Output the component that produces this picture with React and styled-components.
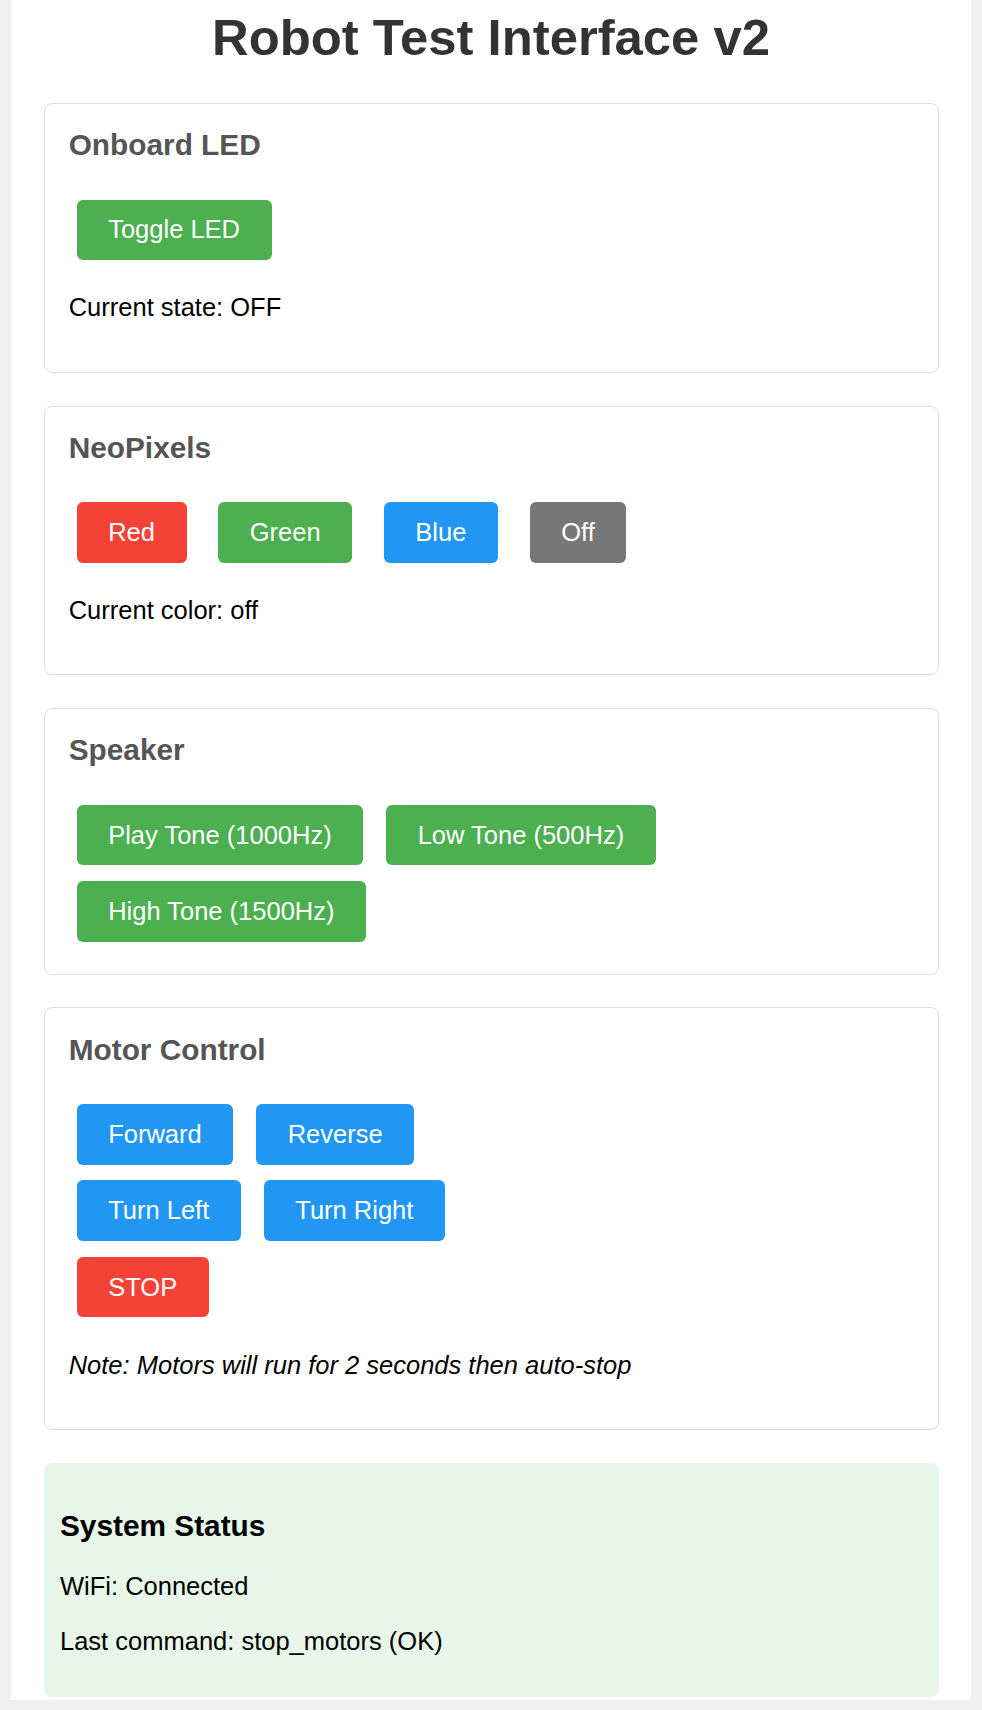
import React from "react";
import styled, { createGlobalStyle } from "styled-components";

const GlobalStyle = createGlobalStyle`
  body {
    margin: 0;
    background: #efefef;
    font-family: "Liberation Sans", Arial, Helvetica, sans-serif;
    font-size: 25.5px;
    color: #000;
  }
`;

const Container = styled.div`
  box-sizing: border-box;
  max-width: 960px;
  min-height: 1700px;
  margin: 0 auto;
  padding: 7.5px 32.5px 0;
  background: #fff;
`;

const Title = styled.h1`
  margin: 0 0 36.5px;
  text-align: center;
  color: #333;
  font-size: 50.8px;
  font-weight: bold;
  line-height: normal;
`;

const Card = styled.section`
  border: 1.6px solid #ddd;
  border-radius: 8px;
  padding: 24.2px;
  margin-bottom: 32.6px;
`;

const CardTitle = styled.h3`
  margin: 0 0 29.6px;
  color: #555;
  font-size: 29.8px;
  line-height: normal;
`;

const ButtonRow = styled.div`
  display: flex;
  flex-wrap: wrap;
  gap: ${(p) => p.$gap || 7}px;
`;

const Button = styled.button`
  margin: 7.9px;
  padding: 15.8px 31.6px;
  border: none;
  border-radius: 6px;
  background: ${(p) => p.$color || "#4CAF50"};
  color: #fff;
  font-family: inherit;
  font-size: 25.5px;
  line-height: normal;
  cursor: pointer;
`;

const Text = styled.p`
  margin: 25.3px 0;
  line-height: normal;
  font-style: ${(p) => (p.$italic ? "italic" : "normal")};
`;

const Status = styled.div`
  background: #e8f5e9;
  border-radius: 8px;
  padding: 16.5px;
`;

const StatusTitle = styled.h3`
  margin: 29.6px 0;
  color: #000;
  font-size: 29.8px;
  line-height: normal;
`;

const RED = "#f44336";
const GREEN = "#4CAF50";
const BLUE = "#2196F3";
const GREY = "#777";

const App = () => {
  return (
    <>
      <GlobalStyle />
      <Container>
        <Title>Robot Test Interface v2</Title>

        <Card>
          <CardTitle>Onboard LED</CardTitle>
          <ButtonRow>
            <Button>Toggle LED</Button>
          </ButtonRow>
          <Text>Current state: OFF</Text>
        </Card>

        <Card>
          <CardTitle>NeoPixels</CardTitle>
          <ButtonRow $gap={15.8}>
            <Button $color={RED}>Red</Button>
            <Button $color={GREEN}>Green</Button>
            <Button $color={BLUE}>Blue</Button>
            <Button $color={GREY}>Off</Button>
          </ButtonRow>
          <Text>Current color: off</Text>
        </Card>

        <Card>
          <CardTitle>Speaker</CardTitle>
          <ButtonRow>
            <Button>Play Tone (1000Hz)</Button>
            <Button>Low Tone (500Hz)</Button>
          </ButtonRow>
          <ButtonRow>
            <Button>High Tone (1500Hz)</Button>
          </ButtonRow>
        </Card>

        <Card>
          <CardTitle>Motor Control</CardTitle>
          <ButtonRow>
            <Button $color={BLUE}>Forward</Button>
            <Button $color={BLUE}>Reverse</Button>
          </ButtonRow>
          <ButtonRow>
            <Button $color={BLUE}>Turn Left</Button>
            <Button $color={BLUE}>Turn Right</Button>
          </ButtonRow>
          <ButtonRow>
            <Button $color={RED}>STOP</Button>
          </ButtonRow>
          <Text $italic>Note: Motors will run for 2 seconds then auto-stop</Text>
        </Card>

        <Status>
          <StatusTitle>System Status</StatusTitle>
          <Text>WiFi: Connected</Text>
          <Text>Last command: stop_motors (OK)</Text>
        </Status>
      </Container>
    </>
  );
};

export default App;
